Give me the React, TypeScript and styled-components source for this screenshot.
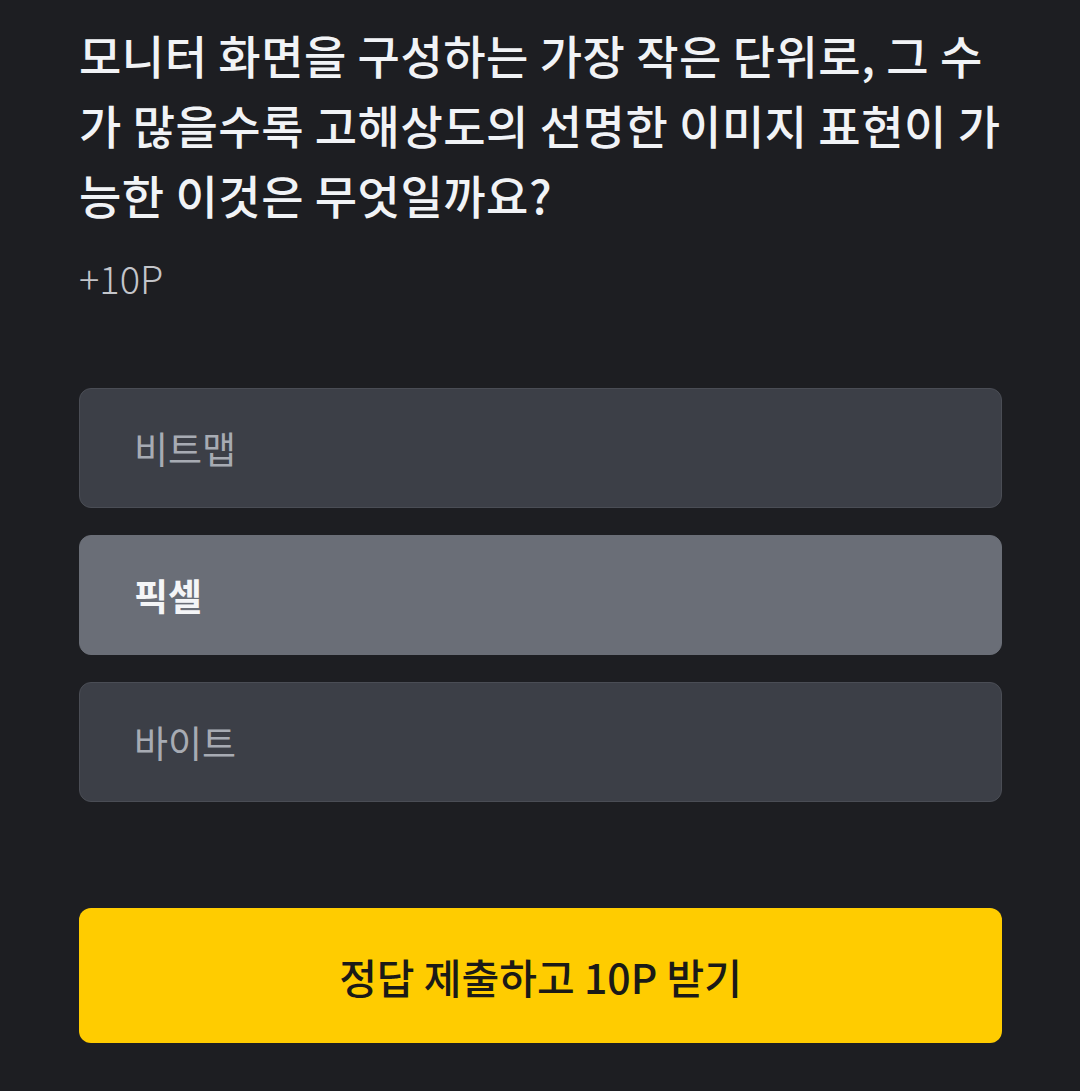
import React, { useState } from "react";
import styled, { createGlobalStyle } from "styled-components";

const GlobalStyle = createGlobalStyle`
  html, body {
    margin: 0;
    padding: 0;
    background: #1d1e22;
  }

  body {
    font-family: "Noto Sans CJK KR", "Noto Sans", sans-serif;
  }
`;

const options = ["비트맵", "픽셀", "바이트"];

export default function App() {
  const [selected, setSelected] = useState(1);

  return (
    <>
      <GlobalStyle />
      <Page>
        <Question>모니터 화면을 구성하는 가장 작은 단위로, 그 수가 많을수록 고해상도의 선명한 이미지 표현이 가능한 이것은 무엇일까요?</Question>
        <Reward>+10P</Reward>
        <OptionList>
          {options.map((label, index) => (
            <Option key={label} $active={index === selected} onClick={() => setSelected(index)}>
              {label}
            </Option>
          ))}
        </OptionList>
        <SubmitButton>정답 제출하고 10P 받기</SubmitButton>
      </Page>
    </>
  );
}

const Page = styled.main`
  padding: 19px 78px 48px 79px;
  display: flex;
  flex-direction: column;
`;

const Question = styled.h1`
  margin: 0;
  font-size: 46px;
  font-weight: 500;
  line-height: 70px;
  color: #f1f3f6;
  word-break: break-all;
  letter-spacing: 0.5px;
`;

const Reward = styled.div`
  margin-top: 24px;
  font-size: 38px;
  font-weight: 300;
  color: #c3c5ca;
  line-height: 50px;
`;

const OptionList = styled.ul`
  list-style: none;
  margin: 85px 0 0;
  padding: 0;
  display: flex;
  flex-direction: column;
  gap: 27px;
`;

const Option = styled.li<{ $active: boolean }>`
  box-sizing: border-box;
  height: 120px;
  padding: 0 54px;
  display: flex;
  align-items: center;
  border-radius: 12px;
  border: 1.5px solid ${(p) => (p.$active ? "#6a6e77" : "#4a4d55")};
  background: ${(p) => (p.$active ? "#6a6e77" : "#3c3f47")};
  color: ${(p) => (p.$active ? "#f4f5f7" : "#a7abb3")};
  font-size: 37px;
  font-weight: ${(p) => (p.$active ? 700 : 400)};
  cursor: pointer;
  user-select: none;
`;

const SubmitButton = styled.button`
  margin-top: 106px;
  height: 135px;
  border: none;
  border-radius: 12px;
  background: #ffcc00;
  color: #1b1a17;
  font-family: inherit;
  font-size: 41px;
  font-weight: 500;
  cursor: pointer;
`;
